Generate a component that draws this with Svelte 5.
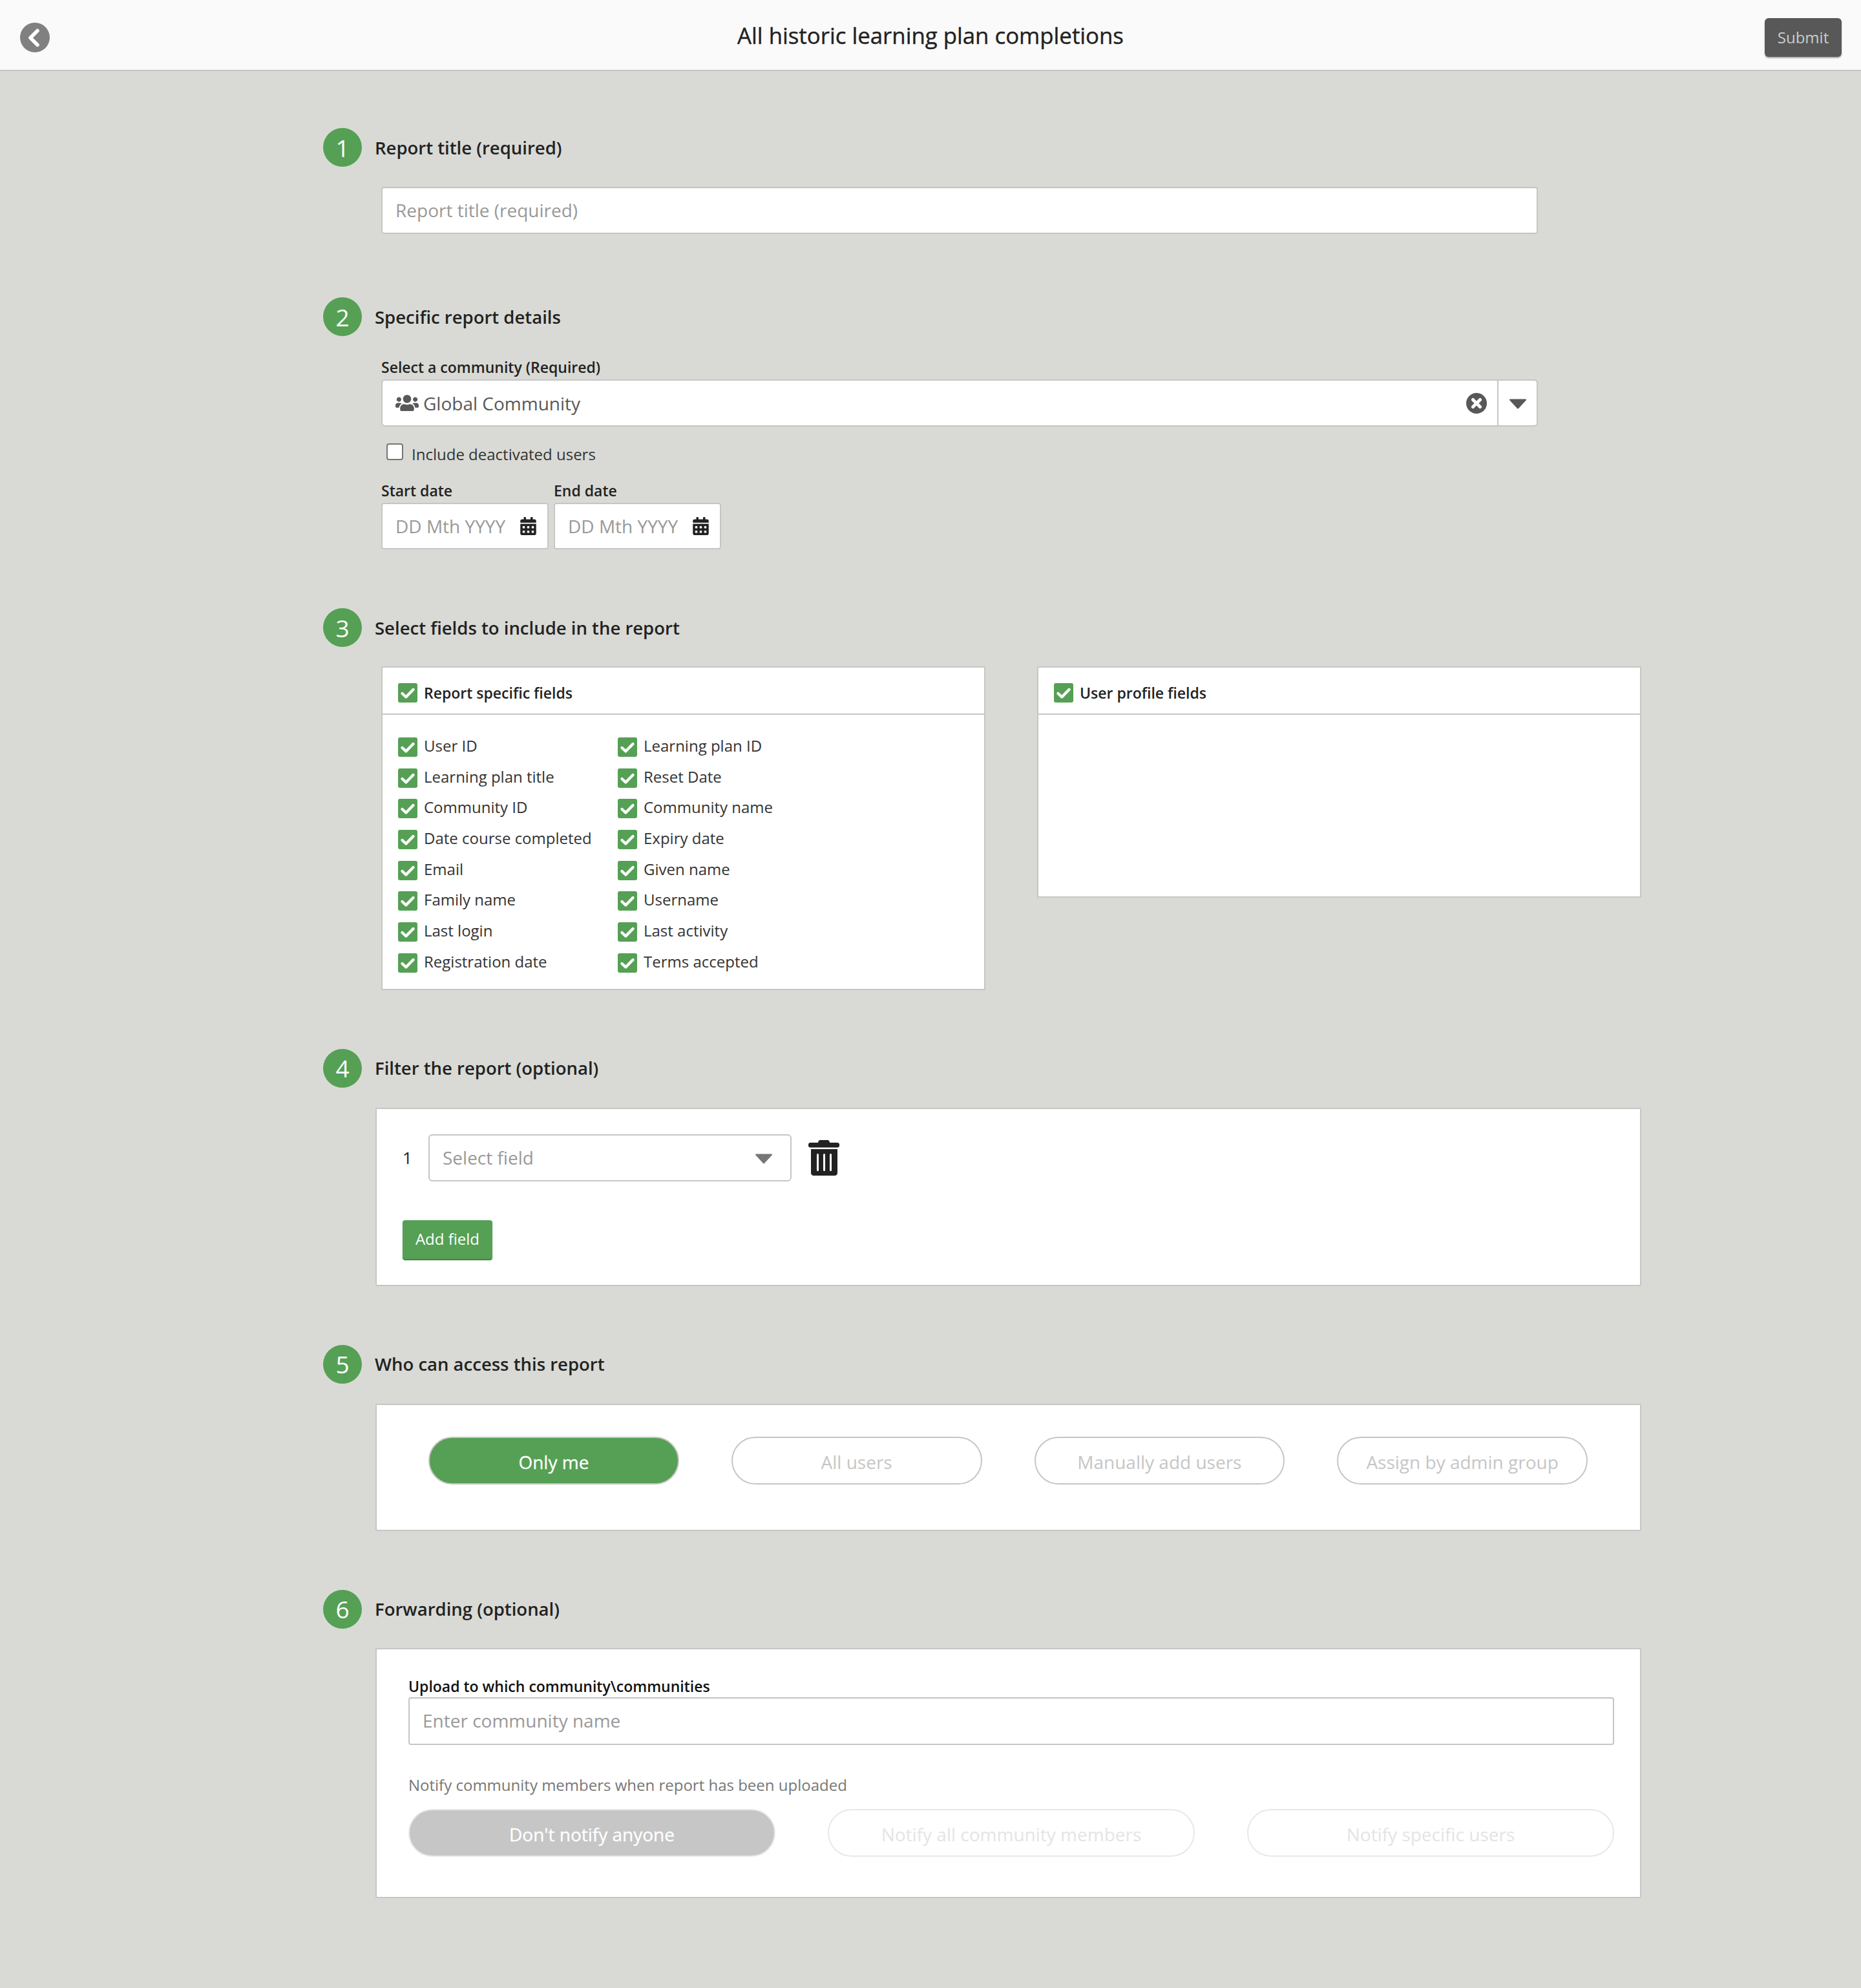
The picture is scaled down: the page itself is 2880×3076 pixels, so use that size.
<script lang="ts">
  const reportFields = [
    ['User ID', 'Learning plan ID'],
    ['Learning plan title', 'Reset Date'],
    ['Community ID', 'Community name'],
    ['Date course completed', 'Expiry date'],
    ['Email', 'Given name'],
    ['Family name', 'Username'],
    ['Last login', 'Last activity'],
    ['Registration date', 'Terms accepted']
  ];
  const accessOptions = ['Only me', 'All users', 'Manually add users', 'Assign by admin group'];
  const notifyOptions = ["Don't notify anyone", 'Notify all community members', 'Notify specific users'];

  let access = $state('Only me');
</script>

{#snippet check()}
  <svg class="check" viewBox="0 0 30 30" aria-hidden="true">
    <rect width="30" height="30" rx="3" fill="#55a054" />
    <path d="M6.5 16l5.8 5.500L23.500 10" fill="none" stroke="#fff" stroke-width="4.400" stroke-linecap="round" stroke-linejoin="round" />
  </svg>
{/snippet}

{#snippet calendar()}
  <svg class="cal" viewBox="0 0 448 512" aria-hidden="true">
    <path fill="#222" d="M0 464c0 26.5 21.5 48 48 48h352c26.5 0 48-21.5 48-48V192H0v272zm320-196c0-6.6 5.4-12 12-12h40c6.6 0 12 5.4 12 12v40c0 6.6-5.4 12-12 12h-40c-6.6 0-12-5.4-12-12v-40zm0 128c0-6.6 5.4-12 12-12h40c6.6 0 12 5.4 12 12v40c0 6.6-5.4 12-12 12h-40c-6.6 0-12-5.4-12-12v-40zM192 268c0-6.6 5.4-12 12-12h40c6.6 0 12 5.4 12 12v40c0 6.6-5.4 12-12 12h-40c-6.6 0-12-5.4-12-12v-40zm0 128c0-6.6 5.4-12 12-12h40c6.6 0 12 5.4 12 12v40c0 6.6-5.4 12-12 12h-40c-6.6 0-12-5.4-12-12v-40zM64 268c0-6.6 5.4-12 12-12h40c6.6 0 12 5.4 12 12v40c0 6.6-5.4 12-12 12H76c-6.6 0-12-5.4-12-12v-40zm0 128c0-6.6 5.4-12 12-12h40c6.6 0 12 5.4 12 12v40c0 6.6-5.4 12-12 12H76c-6.6 0-12-5.4-12-12v-40zM400 64h-48V16c0-8.8-7.2-16-16-16h-32c-8.8 0-16 7.2-16 16v48H160V16c0-8.8-7.2-16-16-16h-32c-8.8 0-16 7.2-16 16v48H48C21.5 64 0 85.5 0 112v48h448v-48c0-26.5-21.5-48-48-48z" />
  </svg>
{/snippet}

{#snippet caret(color)}
  <svg class="caret" viewBox="0 0 28 16" aria-hidden="true">
    <path d="M2 1.5h24L14 14.5z" fill={color} stroke={color} stroke-width="2" stroke-linejoin="round" />
  </svg>
{/snippet}

{#snippet heading(n, label)}
  <div class="sec-head">
    <span class="num">{n}</span>
    <h2>{label}</h2>
  </div>
{/snippet}

<header class="topbar">
  <button class="back" aria-label="Back">
    <svg viewBox="0 0 46 46" aria-hidden="true">
      <circle cx="23" cy="23" r="23" fill="#808080" />
      <path d="M27 12.5L16 23.5l11 11" fill="none" stroke="#fff" stroke-width="5.5" stroke-linecap="round" stroke-linejoin="round" />
    </svg>
  </button>
  <h1>All historic learning plan completions</h1>
  <button class="submit">Submit</button>
</header>

<main class="page">
  <section class="first">
    {@render heading(1, 'Report title (required)')}
    <div class="indent">
      <input class="text-input" placeholder="Report title (required)" />
    </div>
  </section>

  <section>
    {@render heading(2, 'Specific report details')}
    <div class="indent details">
      <div class="field-label">Select a community (Required)</div>
      <div class="combo">
        <svg class="users" viewBox="0 0 640 512" aria-hidden="true">
          <path fill="#585858" d="M96 224c35.3 0 64-28.7 64-64s-28.7-64-64-64-64 28.7-64 64 28.7 64 64 64zm448 0c35.3 0 64-28.7 64-64s-28.7-64-64-64-64 28.7-64 64 28.7 64 64 64zm32 32h-64c-17.6 0-33.5 7.1-45.1 18.6 40.3 22.1 68.9 62 75.1 109.4h66c17.7 0 32-14.3 32-32v-32c0-35.3-28.7-64-64-64zm-256 0c61.9 0 112-50.1 112-112S381.9 32 320 32 208 82.1 208 144s50.1 112 112 112zm76.8 32h-8.3c-20.8 10-43.9 16-68.5 16s-47.6-6-68.5-16h-8.3C179.6 288 128 339.6 128 403.2V432c0 26.5 21.5 48 48 48h288c26.5 0 48-21.5 48-48v-28.8c0-63.6-51.6-115.2-115.2-115.2zm-223.7-13.4C161.5 263.1 145.6 256 128 256H64c-35.3 0-64 28.7-64 64v32c0 17.7 14.3 32 32 32h65.9c6.3-47.4 34.9-87.3 75.2-109.4z" />
        </svg>
        <span class="combo-value">Global Community</span>
        <svg class="clear" viewBox="0 0 32 32" aria-hidden="true">
          <circle cx="16" cy="16" r="16" fill="#585858" />
          <path d="M10.5 10.5l11 11M21.5 10.5l-11 11" stroke="#fff" stroke-width="5" stroke-linecap="round" />
        </svg>
        <div class="combo-toggle">{@render caret('#585858')}</div>
      </div>

      <label class="deactivated">
        <input type="checkbox" />
        <span>Include deactivated users</span>
      </label>

      <div class="dates">
        {#each ['Start date', 'End date'] as d}
          <div class="date-col">
            <div class="field-label">{d}</div>
            <div class="date-input">
              <span>DD Mth YYYY</span>
              {@render calendar()}
            </div>
          </div>
        {/each}
      </div>
    </div>
  </section>

  <section>
    {@render heading(3, 'Select fields to include in the report')}
    <div class="indent field-panels">
      <div class="panel">
        <div class="panel-head">{@render check()}<span>Report specific fields</span></div>
        <div class="panel-body">
          {#each reportFields as row}
            <div class="field-row">
              {#each row as f}
                <div class="field-item">{@render check()}<span>{f}</span></div>
              {/each}
            </div>
          {/each}
        </div>
      </div>
      <div class="panel profile">
        <div class="panel-head">{@render check()}<span>User profile fields</span></div>
      </div>
    </div>
  </section>

  <section>
    {@render heading(4, 'Filter the report (optional)')}
    <div class="box filter">
      <div class="filter-row">
        <span class="filter-num">1</span>
        <div class="filter-select">
          <span>Select field</span>
          {@render caret('#777')}
        </div>
        <svg class="trash" viewBox="0 0 48 55" aria-hidden="true">
          <path fill="#222" d="M15 4c0-2 1.500-4 3.500-4h11c2 0 3.500 2 3.500 4h12c1.500 0 3 1 3 3v2c0 1.500-1.500 2.500-3 2.500H3c-1.500 0-3-1-3-2.500V7c0-2 1.500-3 3-3z" />
          <path fill="#222" d="M4 14h41v37c0 2.200-1.800 4-4 4H8c-2.200 0-4-1.800-4-4z" />
          <rect x="13" y="21" width="3" height="27" rx="1.500" fill="#fff" />
          <rect x="23" y="21" width="3" height="27" rx="1.500" fill="#fff" />
          <rect x="33" y="21" width="3" height="27" rx="1.500" fill="#fff" />
        </svg>
      </div>
      <button class="add-field">Add field</button>
    </div>
  </section>

  <section>
    {@render heading(5, 'Who can access this report')}
    <div class="box access">
      {#each accessOptions as opt}
        <button class="pill" class:active={access === opt} onclick={() => (access = opt)}>{opt}</button>
      {/each}
    </div>
  </section>

  <section>
    {@render heading(6, 'Forwarding (optional)')}
    <div class="box forward">
      <div class="upload-label">Upload to which community\communities</div>
      <input class="text-input" placeholder="Enter community name" />
      <div class="notify-label">Notify community members when report has been uploaded</div>
      <div class="notify-row">
        {#each notifyOptions as opt, i}
          <button class="pill disabled" class:selected={i === 0}>{opt}</button>
        {/each}
      </div>
    </div>
  </section>
</main>

<style>
  :global(body) {
    margin: 0;
    background: #d9dad5;
    font-family: "Open Sans", "Noto Sans", sans-serif;
    color: #222;
  }

  button {
    font-family: inherit;
    cursor: pointer;
  }

  /* top bar */
  .topbar {
    position: relative;
    height: 108px;
    display: flex;
    align-items: center;
    justify-content: center;
    background: #fafafa;
    border-bottom: 2px solid #c6c6c4;
  }

  .topbar h1 {
    margin: 0;
    font-size: 34.800px;
    font-weight: 400;
    -webkit-text-stroke: 0.4px #222;
    color: #222;
  }

  .back {
    position: absolute;
    left: 31px;
    top: 35px;
    width: 46px;
    height: 46px;
    padding: 0;
    border: none;
    background: none;
  }

  .back svg {
    display: block;
    width: 46px;
    height: 46px;
  }

  .submit {
    position: absolute;
    right: 30px;
    top: 28px;
    width: 119px;
    height: 60px;
    padding: 0 0 2px;
    background: #585858;
    color: #ccc;
    font-size: 24px;
    border: none;
    border-radius: 6px;
    box-shadow: 0 2px 2px rgba(0, 0, 0, 0.3);
  }

  /* sections */
  .page {
    box-sizing: border-box;
    width: 2040px;
    margin-left: 500px;
    padding: 88px 0 139px;
  }

  section {
    margin-bottom: 91px;
  }

  section.first {
    margin-bottom: 98px;
  }

  section:last-child {
    margin-bottom: 0;
  }

  .sec-head {
    display: flex;
    align-items: center;
    gap: 20px;
    height: 60px;
  }

  .num {
    width: 60px;
    height: 60px;
    flex-shrink: 0;
    display: flex;
    align-items: center;
    justify-content: center;
    border-radius: 50%;
    background: #55a054;
    color: #fff;
    font-size: 37px;
  }

  h2 {
    margin: 0;
    font-size: 27.500px;
    font-weight: 600;
    color: #222;
  }

  .indent {
    margin-left: 90px;
    margin-top: 31px;
    width: 1790px;
  }

  .text-input {
    display: block;
    box-sizing: border-box;
    width: 100%;
    height: 73px;
    padding: 0 20px 2px;
    font-family: inherit;
    font-size: 28px;
    color: #585858;
    background: #fff;
    border: 2px solid #c6c6c6;
    border-radius: 4px;
    box-shadow: inset 0 1px 2px rgba(0, 0, 0, 0.06);
    outline: none;
  }

  .text-input::placeholder {
    color: #999;
    opacity: 1;
  }

  /* report details */
  .indent.details {
    margin-top: 33px;
  }

  .field-label {
    font-size: 23px;
    font-weight: 600;
    line-height: 31px;
    margin-bottom: 3px;
    color: #222;
  }

  .combo {
    box-sizing: border-box;
    display: flex;
    align-items: center;
    height: 73px;
    padding-left: 20px;
    background: #fff;
    border: 2px solid #c6c6c6;
    border-radius: 6px;
  }

  .users {
    width: 36px;
    height: 29px;
    margin-right: 7px;
    flex-shrink: 0;
  }

  .combo-value {
    flex: 1;
    font-size: 28px;
    color: #585858;
  }

  .clear {
    width: 32px;
    height: 32px;
    margin-right: 16px;
  }

  .combo-toggle {
    width: 59px;
    align-self: stretch;
    display: flex;
    align-items: center;
    justify-content: center;
    border-left: 2px solid #c6c6c6;
  }

  .combo-toggle .caret {
    margin-top: 3px;
  }

  .caret {
    width: 28px;
    height: 16px;
    display: block;
  }

  .deactivated {
    display: flex;
    align-items: flex-start;
    margin-top: 26px;
    margin-left: 8px;
    height: 34px;
    font-size: 24px;
    color: #333;
  }

  .deactivated input {
    appearance: none;
    box-sizing: border-box;
    width: 26px;
    height: 26px;
    margin: 0 13px 0 0;
    background: #fff;
    border: 2px solid #767676;
    border-radius: 4px;
  }

  .dates {
    display: flex;
    gap: 8px;
    margin-top: 24px;
  }

  .date-col {
    width: 259px;
  }

  .date-input {
    box-sizing: border-box;
    height: 72px;
    display: flex;
    align-items: center;
    justify-content: space-between;
    padding: 0 17px 0 20px;
    background: #fff;
    border: 2px solid #c6c6c6;
    border-radius: 4px;
    font-size: 28px;
    color: #999;
    white-space: nowrap;
  }

  .cal {
    width: 25px;
    height: 28px;
    flex-shrink: 0;
  }

  /* field panels */
  .indent.field-panels {
    display: flex;
    align-items: flex-start;
    gap: 80px;
    width: auto;
    margin-top: 30px;
  }

  .panel {
    box-sizing: border-box;
    width: 935px;
    background: #fff;
    border: 2px solid #c6c6c6;
  }

  .panel.profile {
    height: 358px;
  }

  .panel-head {
    box-sizing: border-box;
    height: 73px;
    display: flex;
    align-items: center;
    gap: 10px;
    padding: 6px 0 0 24px;
    border-bottom: 2px solid #c6c6c6;
    font-size: 23px;
    font-weight: 600;
  }

  .check {
    width: 30px;
    height: 30px;
    flex-shrink: 0;
    display: block;
  }

  .panel-body {
    padding: 35px 0 7px 24px;
  }

  .field-row {
    display: grid;
    grid-template-columns: 340px 1fr;
    height: 47.700px;
  }

  .field-item {
    display: flex;
    align-items: flex-start;
    gap: 10px;
    font-size: 24px;
    line-height: 30px;
    color: #333;
  }

  .field-item span {
    position: relative;
    top: -2px;
  }

  /* white boxes */
  .box {
    box-sizing: border-box;
    margin-top: 31px;
    margin-left: 81px;
    background: #fff;
    border: 2px solid #c6c6c6;
    border-radius: 3px;
  }

  .filter {
    height: 276px;
    padding: 39px 0 0 40px;
  }

  .filter-row {
    display: flex;
    align-items: center;
  }

  .filter-num {
    width: 40px;
    font-size: 26px;
    color: #222;
  }

  .filter-select {
    box-sizing: border-box;
    width: 562px;
    height: 73px;
    display: flex;
    align-items: center;
    justify-content: space-between;
    padding: 0 27px 0 20px;
    border: 2px solid #c6c6c6;
    border-radius: 6px;
    font-size: 28px;
    color: #999;
  }

  .filter-select .caret {
    margin-top: 4px;
  }

  .trash {
    width: 48px;
    height: 55px;
    margin-left: 26px;
  }

  .add-field {
    display: block;
    width: 139px;
    height: 60px;
    margin-top: 60px;
    padding: 0 0 2px;
    background: #55a054;
    color: #fff;
    font-size: 24px;
    border: none;
    border-radius: 4px;
    box-shadow: 0 2px 1px #3f7f3f;
  }

  .access {
    height: 197px;
    padding: 49px 81px 0 80px;
    display: grid;
    grid-template-columns: repeat(4, 1fr);
    gap: 81px;
    align-items: start;
  }

  .pill {
    height: 74px;
    padding: 5px 0 0;
    font-size: 28px;
    color: #c6c6c6;
    background: #fff;
    border: 2px solid #c6c6c6;
    border-radius: 37px;
    white-space: nowrap;
  }

  .pill.active {
    background: #55a054;
    color: #fff;
    -webkit-text-stroke: 0.3px #fff;
  }

  .forward {
    height: 387px;
    padding: 41px 40px 0 49px;
    margin-top: 30px;
  }

  .upload-label {
    font-size: 23px;
    font-weight: 600;
    line-height: 32px;
    color: #111;
  }

  .forward .text-input {
    height: 74px;
    margin-top: 1px;
  }

  .notify-label {
    margin-top: 45px;
    font-size: 24px;
    line-height: 34px;
    color: #777;
  }

  .notify-row {
    display: grid;
    grid-template-columns: repeat(3, 1fr);
    gap: 81px;
    margin-top: 20px;
  }

  .pill.disabled {
    color: #e4e4e4;
    border-color: #e8e8e8;
  }

  .pill.disabled.selected {
    background: #c6c6c6;
    color: #fff;
    -webkit-text-stroke: 0.3px #fff;
  }
</style>
